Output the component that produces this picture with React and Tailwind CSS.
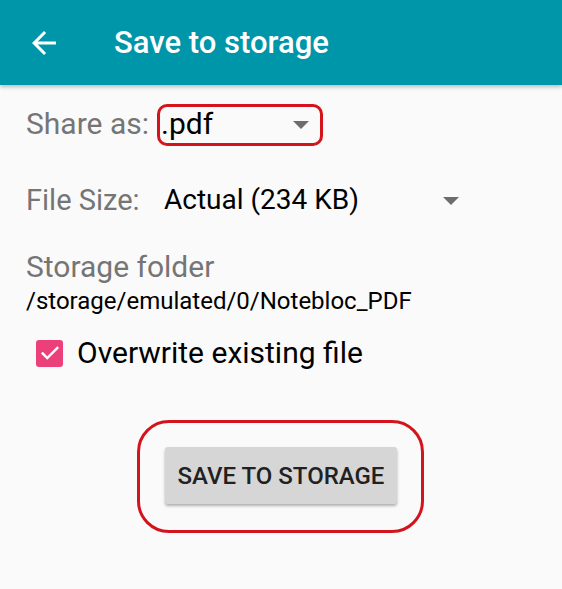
const Caret = () => (
  <svg width="16" height="8" viewBox="0 0 16 8" className="fill-[#6d6d6d]">
    <path d="M0 0h16L8 8z" />
  </svg>
);

const BackArrow = () => (
  <svg width="24" height="24" viewBox="4 4 16 16" className="fill-white">
    <path d="M20 11H7.83l5.59-5.59L12 4l-8 8 8 8 1.41-1.41L7.83 13H20v-2z" />
  </svg>
);

const App = () => {
  return (
    <div className="h-[589px] w-[562px] overflow-hidden bg-[#fafafa] font-['Roboto',sans-serif]">
      {/* Toolbar */}
      <div className="relative z-10 flex h-[85px] items-center bg-[#0096aa] shadow-[0_2px_4px_rgba(0,0,0,0.25)]">
        <span className="ml-[32px] flex"><BackArrow /></span>
        <h1 className="ml-[58px] text-[31px] font-medium leading-none text-white">Save to storage</h1>
      </div>

      <div className="pl-[26px]">
        {/* Share as */}
        <div className="mt-[19px] flex h-[40px] items-center">
          <span className="w-[131px] text-[30px] leading-[40px] text-[#757575]">Share as:</span>
          <div className="relative flex h-[40px] w-[166px] items-center">
            <span className="ml-[4px] text-[30px] leading-[40px] text-black">.pdf</span>
            <span className="absolute left-[136px] top-[17px] flex"><Caret /></span>
            <div className="absolute left-0 top-0 h-[42px] w-[166px] rounded-[10px] border-[3px] border-[#d4141c]" />
          </div>
        </div>

        {/* File size */}
        <div className="mt-[36px] flex h-[40px] items-center">
          <span className="w-[138px] text-[29px] leading-[40px] text-[#757575]">File Size:</span>
          <span className="w-[279px] text-[28px] leading-[40px] text-black">Actual (234 KB)</span>
          <span className="mt-[1px] flex"><Caret /></span>
        </div>

        {/* Storage folder */}
        <div className="mt-[29px] text-[30px] leading-[36px] text-[#757575]">Storage folder</div>
        <div className="mt-[1px] text-[24px] leading-[30px] text-black">/storage/emulated/0/Notebloc_PDF</div>

        {/* Checkbox */}
        <div className="mt-[19px] flex h-[36px] items-center">
          <div className="ml-[10px] flex h-[27px] w-[27px] items-center justify-center rounded-[3px] bg-[#ec407a]">
            <svg width="22" height="22" viewBox="0 0 24 24" fill="none" stroke="white" strokeWidth="2.6" strokeLinecap="square">
              <path d="M4 12.5l5 5L20 6.5" />
            </svg>
          </div>
          <span className="ml-[14px] text-[30px] leading-[36px] text-black">Overwrite existing file</span>
        </div>
      </div>

      {/* Button */}
      <div className="mt-[76px] flex justify-center">
        <div className="relative">
          <button className="h-[57px] w-[232px] rounded-[3px] bg-[#d6d6d6] text-[24px] font-medium text-[#212121] shadow-[0_2px_3px_rgba(0,0,0,0.3)]">
            SAVE TO STORAGE
          </button>
          <div className="absolute -left-[28px] -top-[27px] h-[113px] w-[287px] rounded-[32px] border-[3px] border-[#d4141c]" />
        </div>
      </div>
    </div>
  );
};

export default App;
